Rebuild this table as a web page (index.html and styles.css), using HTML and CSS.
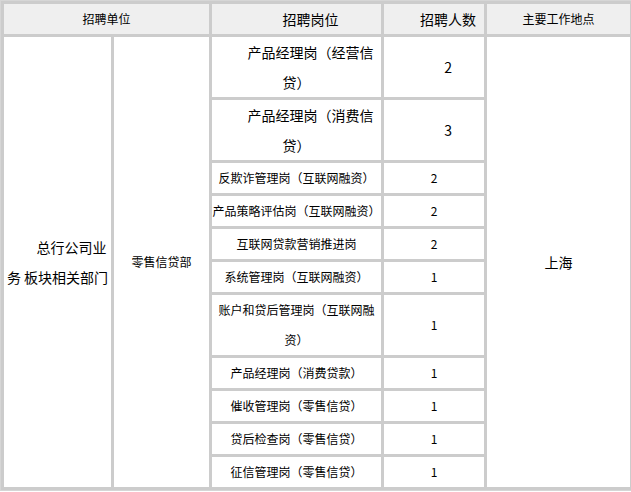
FILE: index.html
```html
<!DOCTYPE html>
<html lang="zh-CN">
<head>
<meta charset="utf-8">
<title>招聘岗位</title>
<link rel="stylesheet" href="styles.css">
</head>
<body>
<table class="jobs">
  <colgroup>
    <col class="c1"><col class="c2"><col class="c3"><col class="c4"><col class="c5">
  </colgroup>
  <thead>
    <tr class="one">
      <th colspan="2" class="s12">招聘单位</th>
      <th class="s14 ind">招聘岗位</th>
      <th class="s14 ind">招聘人数</th>
      <th class="s12">主要工作地点</th>
    </tr>
  </thead>
  <tbody>
    <tr class="two">
      <td rowspan="11" class="s14 ind">总行公司业<br>务 板块相关部门</td>
      <td rowspan="11" class="s12">零售信贷部</td>
      <td class="s14 ind">产品经理岗（经营信<br>贷）</td>
      <td class="s14 ind low">2</td>
      <td rowspan="11" class="s14">上海</td>
    </tr>
    <tr class="two">
      <td class="s14 ind">产品经理岗（消费信<br>贷）</td>
      <td class="s14 ind low">3</td>
    </tr>
    <tr class="one">
      <td class="s12">反欺诈管理岗（互联网融资）</td>
      <td class="s12">2</td>
    </tr>
    <tr class="one">
      <td class="s12">产品策略评估岗（互联网融资）</td>
      <td class="s12">2</td>
    </tr>
    <tr class="one">
      <td class="s12">互联网贷款营销推进岗</td>
      <td class="s12">2</td>
    </tr>
    <tr class="one">
      <td class="s12">系统管理岗（互联网融资）</td>
      <td class="s12">1</td>
    </tr>
    <tr class="two">
      <td class="s12">账户和贷后管理岗（互联网融<br>资）</td>
      <td class="s12">1</td>
    </tr>
    <tr class="one">
      <td class="s12">产品经理岗（消费贷款）</td>
      <td class="s12">1</td>
    </tr>
    <tr class="one">
      <td class="s12">催收管理岗（零售信贷）</td>
      <td class="s12">1</td>
    </tr>
    <tr class="one">
      <td class="s12">贷后检查岗（零售信贷）</td>
      <td class="s12">1</td>
    </tr>
    <tr class="one">
      <td class="s12">征信管理岗（零售信贷）</td>
      <td class="s12">1</td>
    </tr>
  </tbody>
</table>
</body>
</html>
```

FILE: styles.css
```css
html, body {
  margin: 0;
  padding: 0;
  overflow: hidden;
  background: #ffffff;
}

.jobs {
  table-layout: fixed;
  width: 634px;
  border-collapse: separate;
  border-spacing: 3px;
  border: 1px solid #d6d6d6;
  background: #cccccc;
  font-family: "Noto Sans CJK SC", "Liberation Sans", sans-serif;
  color: #000000;
}

.c1 { width: 107px; }
.c2 { width: 95px; }
.c3 { width: 169px; }
.c4 { width: 100px; }
.c5 { width: 143px; }

.jobs th,
.jobs td {
  padding: 0;
  text-align: center;
  vertical-align: middle;
  line-height: 30px;
  white-space: nowrap;
  background: #ffffff;
  font-weight: normal;
}

.jobs th {
  background: #efefef;
}

.one { height: 30px; }
.two { height: 60px; }

.s12 { font-size: 12px; }
.s14 { font-size: 14px; }
.ind { text-indent: 2em; }
.low { padding-top: 6px; }
```
